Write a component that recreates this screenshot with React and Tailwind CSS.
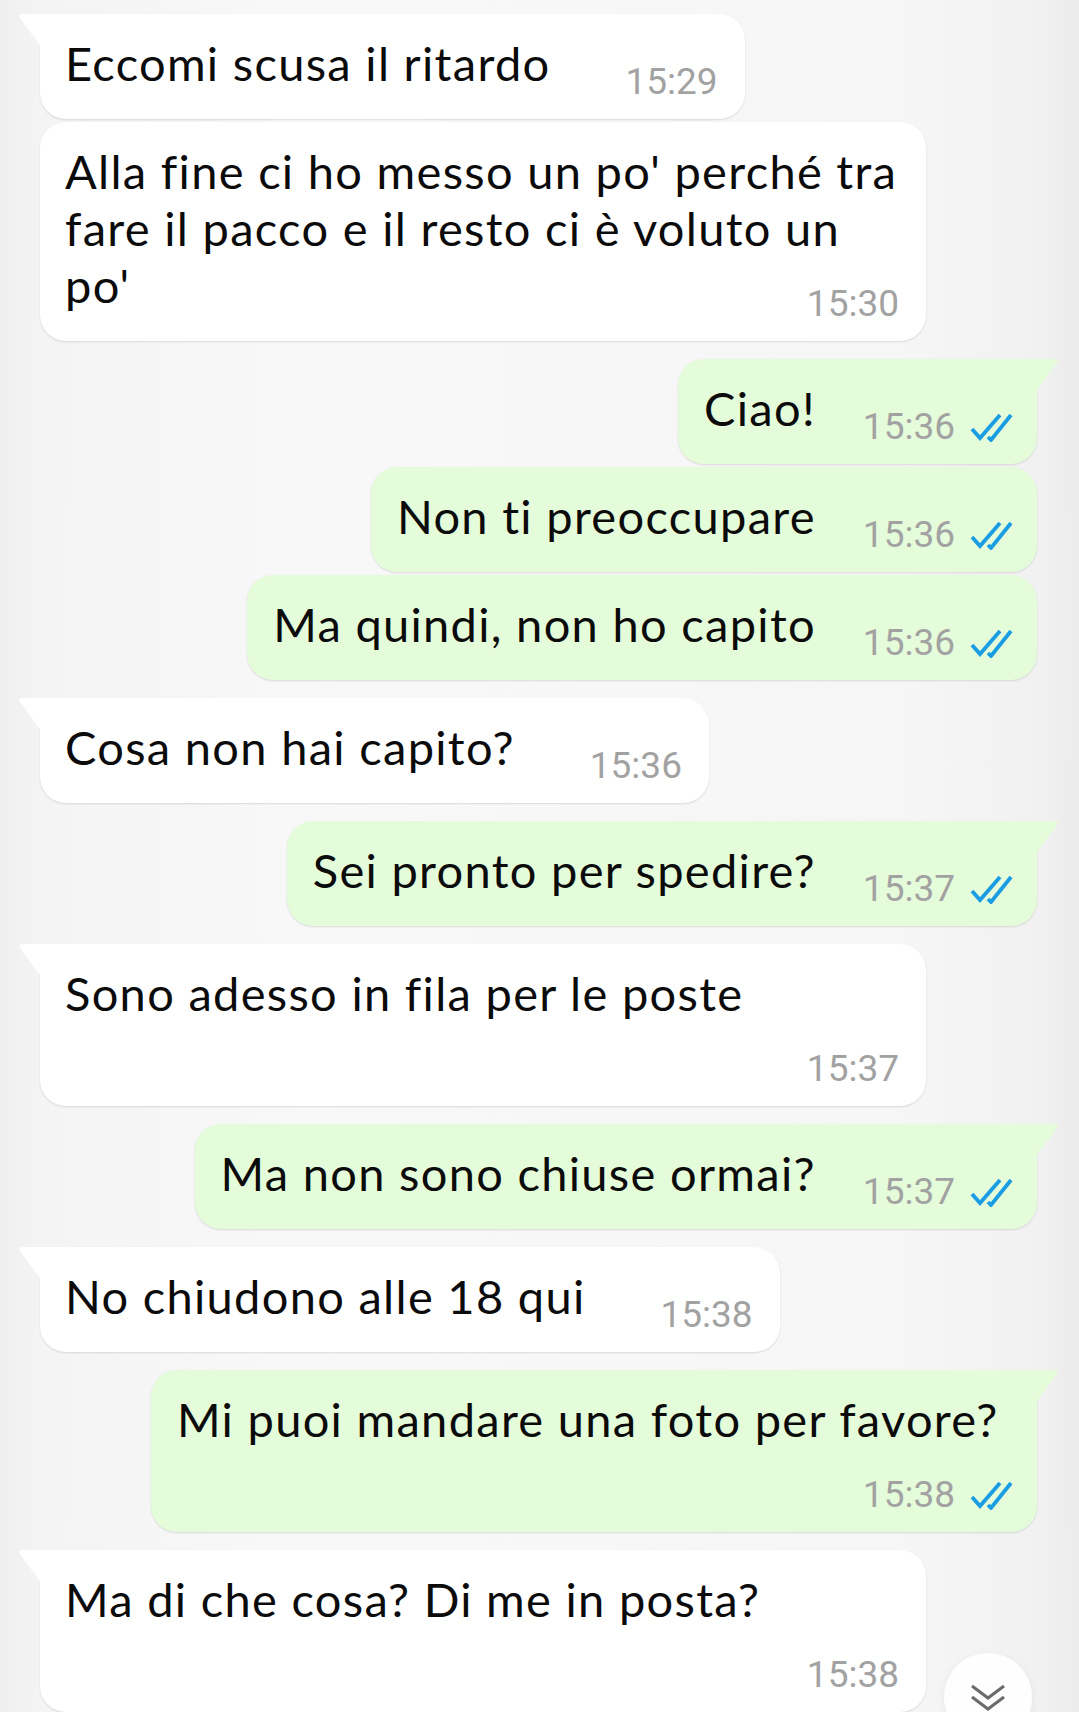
import React from 'react';

const messages = [
  { id: 1, side: 'in', lines: ['Eccomi scusa il ritardo'], time: '15:29', tail: true },
  {
    id: 2,
    side: 'in',
    lines: ["Alla fine ci ho messo un po' perché tra", 'fare il pacco e il resto ci è voluto un', "po'"],
    time: '15:30',
    wide: true,
  },
  { id: 3, side: 'out', lines: ['Ciao!'], time: '15:36', tail: true },
  { id: 4, side: 'out', lines: ['Non ti preoccupare'], time: '15:36' },
  { id: 5, side: 'out', lines: ['Ma quindi, non ho capito'], time: '15:36' },
  { id: 6, side: 'in', lines: ['Cosa non hai capito?'], time: '15:36', tail: true },
  { id: 7, side: 'out', lines: ['Sei pronto per spedire?'], time: '15:37', tail: true },
  { id: 8, side: 'in', lines: ['Sono adesso in fila per le poste'], time: '15:37', tail: true, wide: true, timeBelow: true },
  { id: 9, side: 'out', lines: ['Ma non sono chiuse ormai?'], time: '15:37', tail: true },
  { id: 10, side: 'in', lines: ['No chiudono alle 18 qui'], time: '15:38', tail: true },
  { id: 11, side: 'out', lines: ['Mi puoi mandare una foto per favore?'], time: '15:38', tail: true, wide: true, timeBelow: true },
  { id: 12, side: 'in', lines: ['Ma di che cosa? Di me in posta?'], time: '15:38', tail: true, wide: true, timeBelow: true },
];

function DoubleCheck() {
  return (
    <svg width="44" height="30" viewBox="0 0 44 30" fill="none" className="ml-[14px] mb-[3px]">
      <path d="M3 17 L11 26 L31 3" stroke="#1a9de2" strokeWidth="3.8" strokeLinejoin="miter" />
      <path d="M19 25 L22 28 L42 3" stroke="#1a9de2" strokeWidth="3.8" strokeLinejoin="miter" />
    </svg>
  );
}

function Meta({ time, out }) {
  return (
    <div className={`flex items-end shrink-0 mb-[-8px] ${out ? 'ml-[47px]' : 'ml-[75px]'}`}>
      <span className="font-['Roboto',sans-serif] text-[37px] leading-[37px] tracking-normal text-[#a2a2a2]">{time}</span>
      {out && <DoubleCheck />}
    </div>
  );
}

function Tail({ out }) {
  if (out) {
    return (
      <svg width="24" height="34" viewBox="0 0 24 34" className="absolute top-0 right-[-22px]">
        <path d="M0 0 H20 Q24 0 22 4 L0 34 Z" fill="#e5fcda" />
      </svg>
    );
  }
  return (
    <svg width="24" height="34" viewBox="0 0 24 34" className="absolute top-0 left-[-22px]">
      <path d="M24 0 H4 Q0 0 2 4 L24 34 Z" fill="#ffffff" />
    </svg>
  );
}

function Bubble({ m, first }) {
  const out = m.side === 'out';
  const last = m.lines[m.lines.length - 1];
  const rest = m.lines.slice(0, -1);

  let corners = 'rounded-[26px]';
  if (m.tail) corners = out ? 'rounded-[26px] rounded-tr-none' : 'rounded-[26px] rounded-tl-none';

  return (
    <div className={`flex ${out ? 'justify-end' : 'justify-start'} ${first ? '' : m.tail ? 'mt-[18px]' : 'mt-[3px]'}`}>
      <div
        className={`relative ${m.wide ? 'w-[886px]' : 'w-fit max-w-[886px]'} ${corners} ${
          out ? 'bg-[#e5fcda] pl-[26px] pr-[24px]' : 'bg-white pl-[25px] pr-[27px]'
        } pt-[21px] pb-[27px] shadow-[0_1px_2px_rgba(0,0,0,0.12)]`}
      >
        {m.tail && <Tail out={out} />}
        <div className="text-[47px] leading-[57px] tracking-[1.3px] text-[#0b0b0b] [font-variant-ligatures:none]">
          {rest.map((l) => (
            <div key={l} className="whitespace-nowrap">{l}</div>
          ))}
          <div className="flex items-end justify-between">
            <span className="whitespace-nowrap">{last}</span>
            {!m.timeBelow && <Meta time={m.time} out={out} />}
          </div>
          {m.timeBelow && (
            <div className="flex h-[57px] items-end justify-end">
              <Meta time={m.time} out={out} />
            </div>
          )}
        </div>
      </div>
    </div>
  );
}

export default function App() {
  return (
    <div className="relative h-[1712px] w-[1079px] overflow-hidden bg-[linear-gradient(90deg,#efefef_0px,#f4f4f4_40px,#f8f8f8_300px,#f6f6f6_900px,#f1f1f1_1040px,#ebebeb_1079px)] font-['Lato',sans-serif]">
      <div className="pl-[40px] pr-[42px] pt-[14px]">
        {messages.map((m, i) => (
          <Bubble key={m.id} m={m} first={i === 0} />
        ))}
      </div>

      <button className="absolute left-[944px] top-[1653px] flex h-[88px] w-[88px] items-start justify-center rounded-full bg-white/90 pt-[30px] shadow-[0_2px_8px_rgba(0,0,0,0.06)]">
        <svg width="36" height="30" viewBox="0 0 36 30" fill="none">
          <path d="M2 3 L18 15 L34 3" stroke="#6b6b6b" strokeWidth="3" />
          <path d="M2 14 L18 26 L34 14" stroke="#6b6b6b" strokeWidth="3" />
        </svg>
      </button>
    </div>
  );
}
